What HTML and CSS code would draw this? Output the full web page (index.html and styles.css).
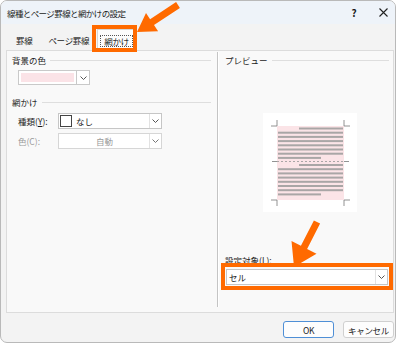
FILE: index.html
```html
<!DOCTYPE html>
<html lang="ja">
<head>
    <meta charset="UTF-8">
    <title>線種とページ罫線と網かけの設定</title>
    <link rel="stylesheet" href="styles.css">
</head>
<body>
    <div class="window">
        <div class="titlebar">
            <span class="title">線種とページ罫線と網かけの設定</span>
            <span class="tb-btn help">?</span>
            <span class="tb-btn close">
                <svg width="9" height="9" viewBox="0 0 9 9"><path d="M0.5 0.5 L8.5 8.5 M8.5 0.5 L0.5 8.5" stroke="#222" stroke-width="1.1"/></svg>
            </span>
        </div>

        <div class="tabs">
            <span class="tab">罫線</span>
            <span class="tab">ページ罫線</span>
            <span class="tab active"><span class="focus">網かけ</span></span>
        </div>

        <div class="panel">
            <div class="col left">
                <div class="group-head"><span>背景の色</span><span class="rule"></span></div>
                <div class="color-combo">
                    <span class="swatch-box"><span class="swatch"></span></span>
                    <span class="arrow-btn">
                        <svg width="7" height="4" viewBox="0 0 7 4"><path d="M0.5 0.5 L3.5 3.5 L6.5 0.5" fill="none" stroke="#555" stroke-width="1"/></svg>
                    </span>
                </div>

                <div class="group-head second"><span>網かけ</span><span class="rule"></span></div>
                <div class="field">
                    <span class="label">種類(<u>Y</u>):</span>
                    <div class="combo">
                        <span class="value"><span class="check"></span>なし</span>
                        <span class="drop">
                            <svg width="7" height="4" viewBox="0 0 7 4"><path d="M0.5 0.5 L3.5 3.5 L6.5 0.5" fill="none" stroke="#555" stroke-width="1"/></svg>
                        </span>
                    </div>
                </div>
                <div class="field disabled">
                    <span class="label">色(C):</span>
                    <div class="combo">
                        <span class="value center">自動</span>
                        <span class="drop">
                            <svg width="7" height="4" viewBox="0 0 7 4"><path d="M0.5 0.5 L3.5 3.5 L6.5 0.5" fill="none" stroke="#777" stroke-width="1"/></svg>
                        </span>
                    </div>
                </div>
            </div>

            <div class="separator"></div>

            <div class="col right">
                <div class="group-head"><span>プレビュー</span><span class="rule"></span></div>
                <div class="preview">
                    <svg width="94" height="99" viewBox="0 0 94 99">
                        <rect x="14" y="13" width="67" height="74" fill="#fbe4e7"/>
                        <g fill="#a9a6a6">
                            <rect x="36" y="14.5" width="44" height="2"/>
                            <rect x="15" y="18.7" width="65" height="2"/>
                            <rect x="15" y="22.9" width="65" height="2"/>
                            <rect x="15" y="27.1" width="65" height="2"/>
                            <rect x="15" y="31.3" width="65" height="2"/>
                            <rect x="15" y="35.5" width="65" height="2"/>
                            <rect x="15" y="39.7" width="65" height="2"/>
                            <rect x="15" y="43.9" width="43" height="2"/>

                            <rect x="36" y="51" width="44" height="2"/>
                            <rect x="15" y="55.2" width="65" height="2"/>
                            <rect x="15" y="59.4" width="65" height="2"/>
                            <rect x="15" y="63.6" width="65" height="2"/>
                            <rect x="15" y="67.8" width="65" height="2"/>
                            <rect x="15" y="72" width="65" height="2"/>
                            <rect x="15" y="76.2" width="65" height="2"/>
                            <rect x="15" y="80.4" width="43" height="2"/>
                        </g>
                        <line x1="14" y1="48.5" x2="81" y2="48.5" stroke="#a9a6a6" stroke-width="1" stroke-dasharray="2 2"/>
                        <g stroke="#777" stroke-width="0.8" fill="none">
                            <path d="M14 7 V13 M8 13 H14"/>
                            <path d="M81 7 V13 M81 13 H87"/>
                            <path d="M14 87 V93 M8 87 H14"/>
                            <path d="M81 87 V93 M81 87 H87"/>
                            <path d="M9 48.5 H14 M81 48.5 H86"/>
                        </g>
                    </svg>
                </div>
                <div class="target-label">設定対象(<u>L</u>):</div>
                <div class="combo wide">
                    <span class="value">セル</span>
                    <span class="drop">
                        <svg width="7" height="4" viewBox="0 0 7 4"><path d="M0.5 0.5 L3.5 3.5 L6.5 0.5" fill="none" stroke="#555" stroke-width="1"/></svg>
                    </span>
                </div>
            </div>
        </div>

        <div class="buttons">
            <span class="btn default">OK</span>
            <span class="btn">キャンセル</span>
        </div>

        <!-- orange callouts -->
        <div class="callout tab-callout"></div>
        <div class="callout target-callout"></div>
        <svg class="arrows" width="400" height="346" viewBox="0 0 400 346">
            <polygon fill="#ff6a00" points="137,32 158.1,31.3 154,25 179.9,7.9 176.1,2.1 150.1,19.2 146,12.9"/>
            <polygon fill="#ff6a00" points="294,267 316.5,253.8 307.1,249 320.1,223.6 313.9,220.4 300.9,245.8 291.5,241"/>
        </svg>
    </div>
</body>
</html>
```

FILE: styles.css
```css
body {
    margin: 0;
    background: #ffffff;
    font-family: "Noto Sans CJK JP", "Noto Sans", sans-serif;
    font-size: 8.5px;
    color: #1b1b1b;
}
.window {
    position: relative;
    width: 396px;
    height: 343px;
    box-sizing: border-box;
    border: 1px solid #b9b9b9;
    border-radius: 7px;
    background: #f3f3f3;
    overflow: hidden;
    display: flex;
    flex-direction: column;
}
.titlebar {
    height: 23px;
    flex: none;
    background: #eef3f9;
    display: flex;
    align-items: center;
    padding-left: 6px;
}
.title {
    flex: 1;
    letter-spacing: -0.6px;
}
.tb-btn {
    display: flex;
    align-items: center;
    justify-content: center;
    height: 23px;
}
.help {
    width: 30px;
    font-size: 10px;
    font-weight: bold;
    margin-right: 2px;
}
.close {
    width: 24px;
}

/* tabs */
.tabs {
    height: 26px;
    flex: none;
    display: flex;
    align-items: flex-end;
    padding-left: 7px;
    letter-spacing: -0.3px;
}
.tab {
    height: 20px;
    line-height: 20px;
    padding: 0 8px;
}
.tab.active {
    position: relative;
    height: 21px;
    margin-bottom: -1px;
    padding: 0 2px;
    background: #fcfcfc;
    border: 1px solid #d6d6d6;
    border-bottom: none;
    display: flex;
    align-items: center;
}
.focus {
    line-height: 10px;
    padding: 0 3px;
    border: 1px dotted #555;
}

/* panel */
.panel {
    height: 263px;
    flex: none;
    box-sizing: border-box;
    margin: 0 1px 0 5px;
    background: #f9f9f9;
    border: 1px solid #dcdcdc;
    display: grid;
    grid-template-columns: 210px 2px 1fr;
}
.separator {
    margin: 1px 0 5px;
    border-left: 1px solid #c4c4c4;
    border-right: 1px solid #ffffff;
}
.col {
    display: flex;
    flex-direction: column;
    align-items: flex-start;
    padding-top: 3px;
}
.left {
    padding-left: 5px;
    padding-right: 6px;
}
.right {
    padding-left: 6px;
    padding-right: 4px;
}
.group-head {
    align-self: stretch;
    height: 12px;
    display: flex;
    align-items: center;
    gap: 4px;
}
.group-head.second {
    margin-top: 11px;
}
.rule {
    flex: 1;
    border-top: 1px solid #dedede;
}

.color-combo {
    margin: 4px 0 0 6px;
    display: flex;
    height: 15px;
}
.swatch-box {
    width: 59px;
    box-sizing: border-box;
    border: 1px solid #c9c9c9;
    background: #ffffff;
    padding: 2px;
}
.swatch {
    display: block;
    height: 100%;
    background: #fbe3e7;
}
.arrow-btn {
    width: 13px;
    box-sizing: border-box;
    border: 1px solid #c9c9c9;
    border-left: none;
    background: #ffffff;
    display: flex;
    align-items: center;
    justify-content: center;
}

.field {
    margin: 5px 0 0 6px;
    display: flex;
    align-items: center;
}
.field + .field {
    margin-top: 4px;
}
.label {
    width: 40px;
}
.disabled .label,
.disabled .value {
    color: #9a9a9a;
}
.combo {
    width: 104px;
    height: 16px;
    box-sizing: border-box;
    border: 1px solid #c6c6c6;
    background: #ffffff;
    display: flex;
}
.disabled .combo {
    border-color: #d6d6d6;
}
.value {
    flex: 1;
    display: flex;
    align-items: center;
    gap: 4px;
    padding-left: 1px;
}
.value.center {
    justify-content: center;
}
.check {
    width: 12px;
    height: 12px;
    box-sizing: border-box;
    border: 1px solid #444;
    background: #ffffff;
}
.drop {
    width: 11px;
    border-left: 1px solid #e2e2e2;
    display: flex;
    align-items: center;
    justify-content: center;
}

.preview {
    margin: 47px 0 0 38px;
    width: 94px;
    height: 99px;
    background: #ffffff;
}
.preview svg {
    display: block;
}
.target-label {
    margin-top: 42px;
    height: 12px;
    line-height: 12px;
}
.combo.wide {
    margin: 3px 0 0 1px;
    width: 162px;
}
.combo.wide .value {
    padding-left: 2px;
}

/* buttons */
.buttons {
    margin-top: 8px;
    padding-right: 1px;
    display: flex;
    justify-content: flex-end;
    gap: 9px;
}
.btn {
    width: 51px;
    height: 17px;
    box-sizing: border-box;
    border: 1px solid #d0d0d0;
    border-radius: 3px;
    background: #fdfdfd;
    display: flex;
    align-items: center;
    justify-content: center;
    letter-spacing: -0.3px;
}
.btn.default {
    border-color: #4f8fd6;
}

/* orange highlights */
.callout {
    position: absolute;
    box-sizing: border-box;
    border: 4px solid #ff6a00;
}
.tab-callout {
    left: 91px;
    top: 24px;
    width: 45px;
    height: 27px;
}
.target-callout {
    left: 220px;
    top: 262px;
    width: 172px;
    height: 27px;
}
.arrows {
    position: absolute;
    left: -1px;
    top: -1px;
}
```
